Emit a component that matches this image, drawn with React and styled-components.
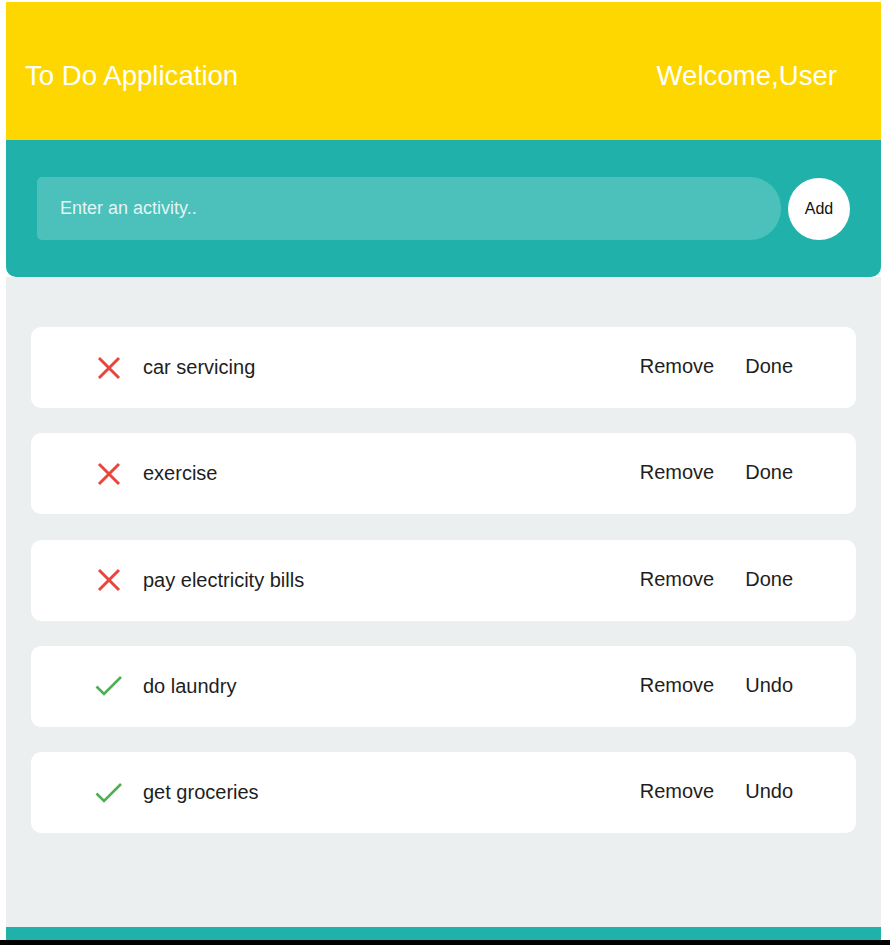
import React from "react";
import styled, { createGlobalStyle } from "styled-components";

const GlobalStyle = createGlobalStyle`
  html, body { margin: 0; padding: 0; background: #ffffff; }
  body { font-family: "Liberation Sans", Arial, sans-serif; }
  input::placeholder { color: rgba(255,255,255,0.85); }
`;

const Page = styled.div`
  padding: 2px 0 0 6px;
`;

const AppShell = styled.div`
  width: 875px;
  display: flex;
  flex-direction: column;
`;

const Header = styled.header`
  height: 138px;
  box-sizing: border-box;
  background: #ffd700;
  display: flex;
  align-items: center;
  justify-content: space-between;
  padding: 10px 44px 0 19px;
  color: #ffffff;
  font-size: 27.6px;
`;

const HeaderText = styled.div``;

const InputBar = styled.form`
  height: 137px;
  box-sizing: border-box;
  background: #20b2aa;
  border-radius: 0 0 10px 10px;
  display: flex;
  align-items: center;
  gap: 7px;
  padding: 0 31px;
`;

const ActivityInput = styled.input`
  flex: 1;
  height: 63px;
  box-sizing: border-box;
  border: none;
  outline: none;
  border-radius: 5px 31px 31px 5px;
  background: rgba(255, 255, 255, 0.2);
  padding: 0 23px;
  font-family: "Liberation Sans", Arial, sans-serif;
  font-size: 18px;
  color: #ffffff;
`;

const AddButton = styled.button`
  width: 62px;
  height: 62px;
  border-radius: 50%;
  border: none;
  background: #ffffff;
  color: #111;
  font-family: "Liberation Sans", Arial, sans-serif;
  font-size: 16px;
  padding: 0;
  cursor: pointer;
`;

const Main = styled.main`
  height: 650px;
  box-sizing: border-box;
  background: #eceff0;
  padding: 50px 25px 0;
  display: flex;
  flex-direction: column;
  gap: 25.25px;
`;

const Card = styled.div`
  height: 81px;
  background: #ffffff;
  border-radius: 10px;
  display: flex;
  align-items: center;
  padding: 0 63px 0 64px;
  font-size: 20px;
  color: #1e1e1e;
`;

const IconBox = styled.span`
  width: 28px;
  height: 28px;
  display: flex;
  align-items: center;
  justify-content: center;
  margin-right: 20px;
`;

const Label = styled.span`
  flex: 1;
`;

const Actions = styled.div`
  display: flex;
  gap: 31px;
  margin-top: -2px;
`;

const TextButton = styled.button`
  background: none;
  border: none;
  padding: 0;
  font-family: "Liberation Sans", Arial, sans-serif;
  font-size: 20px;
  color: #1e1e1e;
  cursor: pointer;
`;

const Footer = styled.footer`
  height: 13px;
  background: #20b2aa;
`;

const BottomEdge = styled.div`
  height: 5px;
  margin-left: -6px;
  background: #000000;
`;

const CrossIcon = () => (
  <svg width="24" height="24" viewBox="0 0 24 24">
    <path d="M2 2 L22 22 M22 2 L2 22" stroke="#e8453c" strokeWidth="3" strokeLinecap="butt" fill="none" />
  </svg>
);

const CheckIcon = () => (
  <svg width="28" height="22" viewBox="0 0 28 22">
    <path d="M1.5 11.5 L9 19 L26 2" stroke="#4caf50" strokeWidth="2.6" fill="none" strokeLinejoin="miter" />
  </svg>
);

const todos = [
  { text: "car servicing", done: false },
  { text: "exercise", done: false },
  { text: "pay electricity bills", done: false },
  { text: "do laundry", done: true },
  { text: "get groceries", done: true },
];

export default function App() {
  return (
    <>
      <GlobalStyle />
      <Page>
        <AppShell>
          <Header>
            <HeaderText>To Do Application</HeaderText>
            <HeaderText>Welcome,User</HeaderText>
          </Header>
          <InputBar onSubmit={(e) => e.preventDefault()}>
            <ActivityInput placeholder="Enter an activity.." />
            <AddButton type="submit">Add</AddButton>
          </InputBar>
          <Main>
            {todos.map((t) => (
              <Card key={t.text}>
                <IconBox>{t.done ? <CheckIcon /> : <CrossIcon />}</IconBox>
                <Label>{t.text}</Label>
                <Actions>
                  <TextButton>Remove</TextButton>
                  <TextButton>{t.done ? "Undo" : "Done"}</TextButton>
                </Actions>
              </Card>
            ))}
          </Main>
          <Footer />
        </AppShell>
        <BottomEdge />
      </Page>
    </>
  );
}
